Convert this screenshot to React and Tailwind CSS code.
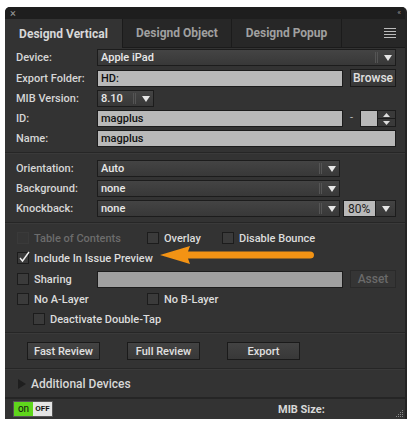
import React from 'react';

const font = { fontFamily: 'Roboto, "Liberation Sans", sans-serif' };

const Arrow = () => (
  <svg width="8" height="6" viewBox="0 0 8 6" className="shrink-0">
    <path d="M0 0 L8 0 L4 6 Z" fill="#e6e6e6" />
  </svg>
);

const Select = ({ value, className = '' }) => (
  <div className={`h-[17px] flex items-center border border-[#1c1c1c] bg-gradient-to-b from-[#444444] to-[#383838] ${className}`}>
    <span className="flex-1 pl-[3px] text-[11px] font-medium text-[#e8e8e8] leading-none">{value}</span>
    <div className="h-[11px] w-[3px] border-l border-r border-[#555] mr-[5px]" />
    <div className="w-[12px] flex justify-center pr-[2px]"><Arrow /></div>
  </div>
);

const Input = ({ value, className = '' }) => (
  <div className={`h-[17px] flex items-center border border-[#1c1c1c] bg-[#b9b9b9] pl-[3px] text-[11px] font-medium text-[#111] leading-none ${className}`}>
    {value}
  </div>
);

const Label = ({ children }) => (
  <div className="w-[81px] shrink-0 text-[11px] font-medium text-[#d6d6d6] leading-none">{children}</div>
);

const Button = ({ children, className = '', disabled }) => (
  <div className={`h-[18px] flex items-center justify-center border border-[#1a1a1a] bg-gradient-to-b from-[#434343] to-[#383838] text-[11px] font-medium leading-none ${disabled ? 'text-[#6a6a6a] border-[#2a2a2a] bg-none bg-[#353535]' : 'text-[#e0e0e0]'} ${className}`}>
    {children}
  </div>
);

const Check = ({ label, checked, disabled, className = '' }) => (
  <div className={`flex items-center gap-[5px] ${className}`}>
    <div className={`w-[12px] h-[12px] border ${disabled ? 'border-[#3a3a3a] bg-[#353535]' : 'border-[#1c1c1c] bg-[#3b3b3b]'} relative`}>
      {checked && (
        <svg width="12" height="12" viewBox="0 0 12 12" className="absolute -top-[2px] left-0">
          <path d="M2 7 L4.5 10 L11 1" stroke="#f0f0f0" strokeWidth="1.4" fill="none" />
        </svg>
      )}
    </div>
    <span className={`text-[11px] font-medium leading-none ${disabled ? 'text-[#6c6c6c]' : 'text-[#dcdcdc]'}`}>{label}</span>
  </div>
);

const Sep = () => <div className="h-[2px] border-t border-[#262626] border-b border-b-[#3a3a3a]" />;

export default function App() {
  return (
    <div className="w-[413px] h-[424px] bg-white pt-[7px] pl-[5px]" style={font}>
      <div className="w-[402px] h-[412px] bg-[#333333] rounded-t-[5px] flex flex-col overflow-hidden relative border-r-[2px] border-[#242424]">
        {/* title bar */}
        <div className="h-[12px] bg-[#1e1e1e] flex items-center justify-between px-[5px] text-[#9a9a9a] text-[10px] leading-none">
          <span className="text-[11px]">×</span>
          <span className="text-[8px] tracking-[-1px]">‹‹</span>
        </div>
        {/* tabs */}
        <div className="h-[29px] flex bg-[#272727] border-b border-[#1b1b1b]">
          <div className="w-[117px] bg-[#333333] flex items-center justify-center text-[12px] font-bold text-[#d8d8d8] -mb-px">Designd Vertical</div>
          <div className="w-[110px] flex items-center justify-center border-r border-[#1b1b1b] border-l text-[12px] font-bold text-[#a0a0a0]">Designd Object</div>
          <div className="w-[110px] flex items-center justify-center border-r border-[#1b1b1b] text-[12px] font-bold text-[#a0a0a0]">Designd Popup</div>
          <div className="flex-1 flex items-center justify-end pr-[9px]">
            <div className="flex flex-col gap-[2px]">
              <div className="w-[12px] h-px bg-[#bbb]" />
              <div className="w-[12px] h-px bg-[#bbb]" />
              <div className="w-[12px] h-px bg-[#bbb]" />
              <div className="w-[12px] h-px bg-[#bbb]" />
            </div>
          </div>
        </div>

        {/* fields */}
        <div className="pl-[11px] pr-[9px] pt-[1px] flex flex-col gap-[3px]">
          <div className="flex items-center"><Label>Device:</Label><Select value="Apple iPad" className="flex-1" /></div>
          <div className="flex items-center"><Label>Export Folder:</Label><Input value="HD:" className="w-[246px]" /><Button className="ml-[7px] flex-1 text-[12px]">Browse</Button></div>
          <div className="flex items-center"><Label>MIB Version:</Label><Select value="8.10" className="w-[57px]" /></div>
          <div className="flex items-center">
            <Label>ID:</Label><Input value="magplus" className="w-[246px]" />
            <span className="w-[17px] text-center text-[#bbb] text-[11px]">-</span>
            <div className="w-[18px] h-[17px] bg-[#b9b9b9] border border-[#1c1c1c]" />
            <div className="flex-1 h-[17px] border border-[#1c1c1c] border-l-0 flex flex-col bg-[#3a3a3a]">
              <div className="flex-1 flex items-center justify-center border-b border-[#1c1c1c]">
                <svg width="7" height="4" viewBox="0 0 7 4"><path d="M0 4 L7 4 L3.5 0 Z" fill="#ddd" /></svg>
              </div>
              <div className="flex-1 flex items-center justify-center">
                <svg width="7" height="4" viewBox="0 0 7 4"><path d="M0 0 L7 0 L3.5 4 Z" fill="#ddd" /></svg>
              </div>
            </div>
          </div>
          <div className="flex items-center"><Label>Name:</Label><Input value="magplus" className="flex-1" /></div>
        </div>

        <div className="mt-[5px]"><Sep /></div>

        <div className="pl-[11px] pr-[9px] pt-[6px] flex flex-col gap-[3px]">
          <div className="flex items-center"><Label>Orientation:</Label><Select value="Auto" className="w-[243px]" /></div>
          <div className="flex items-center"><Label>Background:</Label><Select value="none" className="w-[243px]" /></div>
          <div className="flex items-center">
            <Label>Knockback:</Label><Select value="none" className="w-[243px]" />
            <div className="ml-[3px] w-[33px] h-[17px] bg-[#b9b9b9] border border-[#1c1c1c] flex items-center pl-[4px] text-[12px] text-[#222] leading-none">80%</div>
            <div className="flex-1 h-[17px] border border-[#1c1c1c] border-l-0 bg-gradient-to-b from-[#444] to-[#383838] flex items-center justify-center"><Arrow /></div>
          </div>
        </div>

        <div className="mt-[5px]"><Sep /></div>

        <div className="relative pl-[12px] pr-[9px] pt-[8px] flex flex-col gap-[8px]">
          <div className="flex items-center">
            <Check label="Table of Contents" disabled className="w-[130px]" />
            <Check label="Overlay" className="w-[75px]" />
            <Check label="Disable Bounce" />
          </div>
          <div className="flex items-center">
            <Check label="Include In Issue Preview" checked />
          </div>
          <div className="flex items-center -my-[2px]">
            <div className="w-[80px]"><Check label="Sharing" /></div>
            <div className="w-[246px] h-[17px] bg-[#a0a0a0] border border-[#1c1c1c]" />
            <Button disabled className="ml-[7px] flex-1 text-[12px]">Asset</Button>
          </div>
          <div className="flex items-center -mt-[1px]">
            <Check label="No A-Layer" className="w-[130px]" />
            <Check label="No B-Layer" />
          </div>
          <div className="flex items-center pl-[16px]">
            <Check label="Deactivate Double-Tap" />
          </div>
          {/* orange arrow */}
          <svg width="160" height="20" viewBox="0 0 160 20" className="absolute left-[154px] top-[21px]">
            <path d="M1 10 L31 1 L29 6.5 L151 6.5 Q155 6.5 155 10 Q155 13.5 151 13.5 L29 13.5 L31 19 Z" fill="#f39314" />
          </svg>
        </div>

        <div className="mt-[7px]"><Sep /></div>

        <div className="pl-[22px] pt-[8px] pb-[8px] flex gap-[27px]">
          <Button className="w-[73px]">Fast Review</Button>
          <Button className="w-[73px]">Full Review</Button>
          <Button className="w-[73px]">Export</Button>
        </div>

        <Sep />

        <div className="h-[27px] flex items-center pl-[13px] gap-[5px]">
          <svg width="8" height="10" viewBox="0 0 8 10"><path d="M0 0 L8 5 L0 10 Z" fill="#1e1e1e" /></svg>
          <span className="text-[12px] font-medium text-[#d8d8d8] leading-none">Additional Devices</span>
        </div>

        <div className="h-[2px] bg-[#252525]" />

        <div className="flex-1 flex items-center pl-[8px] relative">
          <div className="flex h-[16px] border border-[#555] text-[9px] leading-none">
            <div className="w-[19px] bg-[#5fd61c] flex items-center justify-center text-[#111] text-[10px]">on</div>
            <div className="w-[19px] bg-[#e4e4e4] flex items-center justify-center text-[#111] font-bold text-[8px]">OFF</div>
          </div>
          <span className="ml-[225px] text-[11px] font-bold text-[#d8d8d8] leading-none">MIB Size:</span>
          <svg width="8" height="8" viewBox="0 0 8 8" className="absolute right-[1px] bottom-[1px]">
            <g fill="#888">
              <rect x="6" y="0" width="1" height="1" />
              <rect x="4" y="2" width="1" height="1" /><rect x="6" y="2" width="1" height="1" />
              <rect x="2" y="4" width="1" height="1" /><rect x="4" y="4" width="1" height="1" /><rect x="6" y="4" width="1" height="1" />
              <rect x="0" y="6" width="1" height="1" /><rect x="2" y="6" width="1" height="1" /><rect x="4" y="6" width="1" height="1" /><rect x="6" y="6" width="1" height="1" />
            </g>
          </svg>
        </div>
      </div>
    </div>
  );
}
